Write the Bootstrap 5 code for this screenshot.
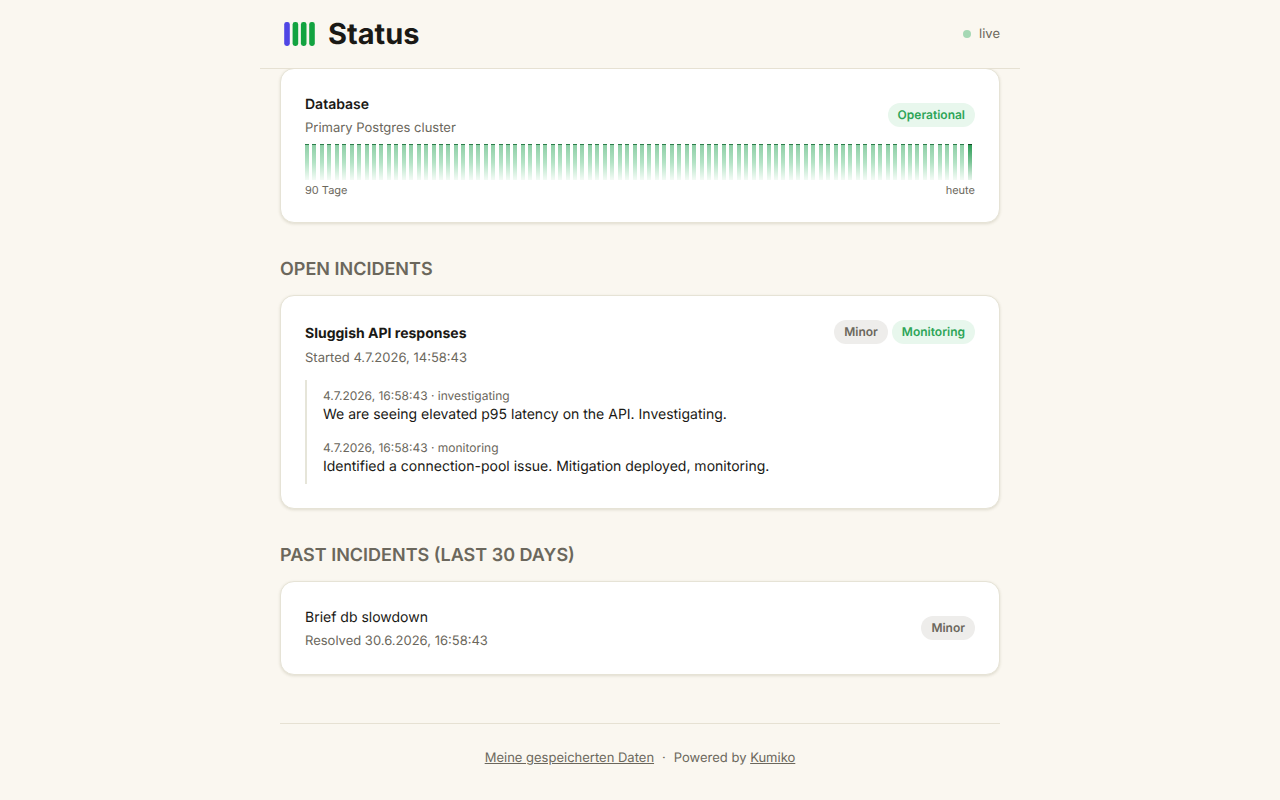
<!DOCTYPE html>
<html lang="en">
<head>
<meta charset="utf-8">
<meta name="viewport" content="width=device-width, initial-scale=1">
<title>Status</title>
<link href="https://cdn.jsdelivr.net/npm/bootstrap@5.3.0/dist/css/bootstrap.min.css" rel="stylesheet">
<style>
  body { background: #faf7f0; color: #1a1915; font-family: Inter, "Liberation Sans", sans-serif; font-size: 14px; line-height: 22px; text-rendering: geometricPrecision; font-optical-sizing: none; }
  .page { max-width: 760px; }
  .topbar { padding: 12px 20px; border-bottom: 1px solid #e6e1d3; background: #faf7f0; z-index: 10; }
  .brand { font-size: 29px; line-height: 44px; font-weight: 700; }
  .live-dot { width: 8px; height: 8px; background: #a5d8b4; }
  .quiet { color: #6b675c; }
  .meta { font-size: 13px; line-height: 18px; }
  .tiny { font-size: 11px; line-height: 16px; margin-top: 2px; }
  .stamp { font-size: 12px; line-height: 16px; }
  .content { padding: 0 20px; margin-top: -1px; }
  .panel { border: 1px solid #e6e3d6; border-radius: 14px; padding: 24px; box-shadow: 0 1px 3px rgba(90, 80, 40, .16); }
  .section-title { font-size: 18px; line-height: 30px; font-weight: 600; margin: 32px 0 10px; }
  .item-title { font-size: 14px; line-height: 24px; font-weight: 600; margin: 0 0 2px; }
  .incident-title { line-height: 28px; margin-bottom: 1px; }
  .pill { font-size: 12px; line-height: 16px; font-weight: 600; padding: 4px 10px; }
  .pill-ok { background: #e8f7ed; color: #2da558; }
  .pill-minor { background: #eeedeb; color: #6b675c; }
  .uptime { display: grid; grid-template-columns: repeat(90, 1fr); height: 36px; margin-top: 7px; }
  .uptime i { width: 4px; border-top: 1px solid #2c7d4a; background: linear-gradient(#8fcfa7, #b3e3c5 50%, #f4fbf6); }
  .uptime i:last-child { border-color: #0c4a22; background: linear-gradient(#2f9d58, #7cc597 50%, #e9f5ed); }
  .timeline { display: grid; gap: 14px; border-left: 2px solid #e6e5d9; padding: 8px 0 6px 16px; margin-top: 13px; }
  .foot { border-top: 1px solid #e6e1d3; margin-top: 48px; padding: 25px 0; }
</style>
</head>
<body>
<div class="page mx-auto">
  <header class="topbar sticky-top d-flex justify-content-between align-items-center">
    <h1 class="brand d-flex align-items-center gap-2 m-0">
      <svg width="40" height="32" viewBox="0 0 40 32" aria-hidden="true">
        <rect x="4.2" y="4" width="5.6" height="24" rx="2.4" fill="#4f46e5"/>
        <rect x="12.6" y="4" width="5.6" height="24" rx="2.4" fill="#12a340"/>
        <rect x="20.9" y="4" width="5.6" height="24" rx="2.4" fill="#12a340"/>
        <rect x="29.2" y="4" width="5.6" height="24" rx="2.4" fill="#12a340"/>
      </svg>
      Status
    </h1>
    <div class="d-flex align-items-center gap-2 meta quiet"><span class="live-dot rounded-circle"></span>live</div>
  </header>

  <main class="content">
    <section class="panel bg-white">
      <div class="d-flex justify-content-between align-items-center">
        <div>
          <h3 class="item-title">Database</h3>
          <div class="meta quiet">Primary Postgres cluster</div>
        </div>
        <span class="pill pill-ok rounded-pill">Operational</span>
      </div>
      <div class="uptime" id="uptime" role="img" aria-label="Uptime"></div>
      <div class="d-flex justify-content-between tiny quiet"><span>90 Tage</span><span>heute</span></div>
    </section>

    <h2 class="section-title quiet">OPEN INCIDENTS</h2>
    <section class="panel bg-white">
      <div class="d-flex justify-content-between align-items-start">
        <div>
          <h3 class="item-title incident-title fw-bold">Sluggish API responses</h3>
          <div class="meta quiet">Started 4.7.2026, 14:58:43</div>
        </div>
        <div class="d-flex gap-1">
          <span class="pill pill-minor rounded-pill">Minor</span>
          <span class="pill pill-ok rounded-pill">Monitoring</span>
        </div>
      </div>
      <div class="timeline">
        <div>
          <div class="stamp quiet">4.7.2026, 16:58:43 · investigating</div>
          <div>We are seeing elevated p95 latency on the API. Investigating.</div>
        </div>
        <div>
          <div class="stamp quiet">4.7.2026, 16:58:43 · monitoring</div>
          <div>Identified a connection-pool issue. Mitigation deployed, monitoring.</div>
        </div>
      </div>
    </section>

    <h2 class="section-title quiet">PAST INCIDENTS (LAST 30 DAYS)</h2>
    <section class="panel bg-white d-flex justify-content-between align-items-center">
      <div>
        <h3 class="item-title fw-normal">Brief db slowdown</h3>
        <div class="meta quiet">Resolved 30.6.2026, 16:58:43</div>
      </div>
      <span class="pill pill-minor rounded-pill">Minor</span>
    </section>

    <footer class="foot meta quiet d-flex justify-content-center">
      <a href="#" class="quiet">Meine gespeicherten Daten</a>
      <span class="mx-2">·</span>
      <span>Powered by <a href="#" class="quiet">Kumiko</a></span>
    </footer>
  </main>
</div>
<script src="https://cdn.jsdelivr.net/npm/bootstrap@5.3.0/dist/js/bootstrap.bundle.min.js"></script>
<script>
  const uptime = document.getElementById('uptime');
  for (let day = 0; day < 90; day++) uptime.append(document.createElement('i'));
</script>
</body>
</html>
